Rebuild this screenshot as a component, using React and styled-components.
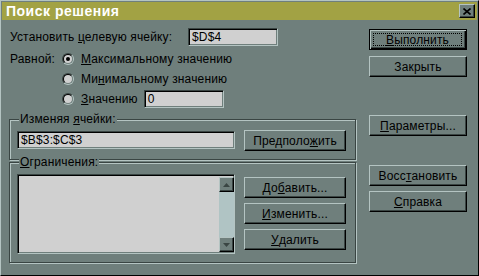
import React from 'react';
import styled, { createGlobalStyle, css } from 'styled-components';

const c = {
  face: '#6f7f7c',
  light: '#b4c4c2',
  dark: '#3a4543',
  black: '#000000',
  field: '#d0d0d0',
  title: '#a2a244',
  track: '#b0c4c4',
  text: '#000000',
};

const GlobalStyle = createGlobalStyle`
  html, body { margin: 0; padding: 0; background: ${c.face}; }
  body { font-family: "Liberation Sans", Arial, sans-serif; font-size: 12px; letter-spacing: 0.15px; color: ${c.text}; }
  * { box-sizing: border-box; }
`;

// window frame
const Window = styled.div`
  width: 479px;
  height: 276px;
  background: ${c.face};
  border: 1px solid;
  border-color: ${c.light} ${c.black} ${c.black} ${c.light};
  padding: 1px;
  display: flex;
  flex-direction: column;
  overflow: hidden;
`;

const TitleBar = styled.div`
  height: 18px;
  background: ${c.title};
  display: flex;
  align-items: center;
  justify-content: space-between;
  padding: 0 2px 0 4px;
`;

const Title = styled.span`
  color: #ffffff;
  font-weight: bold;
  font-size: 14px;
  letter-spacing: 0.5px;
`;

const CloseButton = styled.div`
  width: 16px;
  height: 14px;
  background: ${c.face};
  border: 1px solid;
  border-color: ${c.light} ${c.black} ${c.black} ${c.light};
  box-shadow: inset -1px -1px 0 ${c.dark};
  display: flex;
  align-items: center;
  justify-content: center;
`;

const Body = styled.div`
  flex: 1;
  display: flex;
  gap: 13px;
  padding: 8px 0 0 7px;
`;

const MainColumn = styled.div`
  width: 347px;
  display: flex;
  flex-direction: column;
`;

const FieldRow = styled.div`
  display: flex;
  align-items: center;
  height: 18px;
`;

const Label = styled.span`
  width: ${p => p.$w || 'auto'};
  padding-left: ${p => p.$pl || 1}px;
  white-space: nowrap;
  align-self: ${p => p.$top ? 'flex-start' : 'auto'};
  line-height: 20px;
`;

const U = styled.span`
  text-decoration: underline;
  text-underline-offset: 1px;
`;

const sunken = css`
  border: 1px solid;
  border-color: ${c.dark} ${c.light} ${c.light} ${c.dark};
  box-shadow: inset 1px 1px 0 ${c.black}, inset -1px -1px 0 ${c.face};
`;

const TextInput = styled.div`
  width: ${p => p.$w}px;
  height: 18px;
  margin-left: ${p => p.$ml || 0}px;
  background: ${c.field};
  ${sunken};
  padding: 0 3px;
  line-height: 16px;
  white-space: nowrap;
`;

const EqualBlock = styled.div`
  display: flex;
  margin-top: 3px;
`;

const RadioList = styled.div`
  display: flex;
  flex-direction: column;
`;

const RadioRow = styled.div`
  display: flex;
  align-items: center;
  height: 20px;
  gap: 7px;
`;

const RadioOuter = styled.span`
  width: 12px;
  height: 12px;
  border-radius: 50%;
  border: 1px solid;
  border-color: ${c.dark} ${c.light} ${c.light} ${c.dark};
  display: flex;
`;

const RadioInner = styled.span`
  flex: 1;
  border-radius: 50%;
  border: 1px solid;
  border-color: ${c.black} ${c.face} ${c.face} ${c.black};
  background: ${c.field};
  display: flex;
  align-items: center;
  justify-content: center;
  &::after {
    content: '';
    width: 4px;
    height: 4px;
    border-radius: 50%;
    background: ${p => p.$on ? c.black : 'transparent'};
  }
`;

const Radio = ({ on, children, after }) => (
  <RadioRow>
    <RadioOuter><RadioInner $on={on} /></RadioOuter>
    <span>{children}</span>
    {after}
  </RadioRow>
);

const GroupBox = styled.fieldset`
  margin: ${p => p.$mt || 0}px 0 0 0;
  padding: ${p => p.$pad};
  min-width: 0;
  height: ${p => p.$h}px;
  border: 1px solid ${c.dark};
  box-shadow: 1px 1px 0 ${c.light}, inset 1px 1px 0 ${c.light};
  display: flex;
  gap: 9px;
`;

const Legend = styled.legend`
  padding: 0 1px;
  margin-left: 2px;
  line-height: 13px;
  background: ${c.face};
`;

const Button = styled.div`
  width: ${p => p.$w || 98}px;
  height: 21px;
  flex-shrink: 0;
  display: flex;
  align-items: center;
  justify-content: center;
  border: 1px solid;
  border-color: ${c.light} ${c.black} ${c.black} ${c.light};
  box-shadow: inset -1px -1px 0 ${c.dark};
  white-space: nowrap;
  margin-top: ${p => p.$mt || 0}px;
  ${p => p.$default && css`
    border: 1px solid ${c.black};
    box-shadow: inset 1px 1px 0 ${c.light}, inset -1px -1px 0 ${c.black}, inset -2px -2px 0 ${c.dark};
  `}
`;

const FocusRing = styled.span`
  flex: 1;
  align-self: stretch;
  margin: 3px 4px 3px 3px;
  border: 1px dotted ${c.black};
  display: flex;
  align-items: center;
  justify-content: center;
`;

const ButtonStack = styled.div`
  display: flex;
  flex-direction: column;
  gap: 5px;
  padding-top: ${p => p.$pt || 0}px;
`;

const ListBox = styled.div`
  width: 218px;
  height: 80px;
  background: ${c.field};
  ${sunken};
  display: flex;
  justify-content: flex-end;
  padding: 2px 0 0 0;
  margin-top: 5px;
`;

const ScrollBar = styled.div`
  width: 15px;
  background: ${c.track};
  display: flex;
  flex-direction: column;
  justify-content: space-between;
  margin-bottom: 1px;
`;

const ScrollButton = styled.div`
  height: 15px;
  background: ${c.face};
  border: 1px solid;
  border-color: ${c.light} ${c.black} ${c.black} ${c.light};
  box-shadow: inset -1px -1px 0 ${c.dark};
  display: flex;
  align-items: center;
  justify-content: center;
`;

const SideColumn = styled.div`
  display: flex;
  flex-direction: column;
  padding-top: 1px;
`;

const Arrow = ({ down }) => (
  <svg width="7" height="4" viewBox="0 0 7 4">
    <path d={down ? 'M0 0h7L3.5 4z' : 'M3.5 0L7 4H0z'} fill={c.dark} />
  </svg>
);

export default function App() {
  return (
    <>
      <GlobalStyle />
      <Window>
        <TitleBar>
          <Title>Поиск решения</Title>
          <CloseButton>
            <svg width="8" height="7" viewBox="0 0 8 7">
              <path d="M0.5 0.5L7.5 6.5M7.5 0.5L0.5 6.5" stroke="#000" strokeWidth="1.6" />
            </svg>
          </CloseButton>
        </TitleBar>
        <Body>
          <MainColumn>
            <FieldRow>
              <Label $w="179px">Установить <U>ц</U>елевую ячейку:</Label>
              <TextInput $w={90}>$D$4</TextInput>
            </FieldRow>
            <EqualBlock>
              <Label $w="53px" $top>Равной:</Label>
              <RadioList>
                <Radio on><U>М</U>аксимальному значению</Radio>
                <Radio>Ми<U>н</U>имальному значению</Radio>
                <Radio after={<TextInput $w={80} $ml={-1}>0</TextInput>}>
                  <U>З</U>начению
                </Radio>
              </RadioList>
            </EqualBlock>
            <GroupBox $mt={4} $h={47} $pad="4px 9px 0 7px">
              <Legend>Изменяя <U>я</U>чейки:</Legend>
              <TextInput $w={218} style={{ marginTop: 1 }}>$B$3:$C$3</TextInput>
              <Button $w={102}>Предполо<U>ж</U>ить</Button>
            </GroupBox>
            <GroupBox $mt={-4} $h={107} $pad="0 9px 0 7px">
              <Legend><U>О</U>граничения:</Legend>
              <ListBox>
                <ScrollBar>
                  <ScrollButton><Arrow /></ScrollButton>
                  <ScrollButton><Arrow down /></ScrollButton>
                </ScrollBar>
              </ListBox>
              <ButtonStack $pt={8}>
                <Button $w={102}>До<U>б</U>авить...</Button>
                <Button $w={102}><U>И</U>зменить...</Button>
                <Button $w={102}><U>У</U>далить</Button>
              </ButtonStack>
            </GroupBox>
          </MainColumn>
          <SideColumn>
            <Button $default><FocusRing><U>В</U>ыполнить</FocusRing></Button>
            <Button $mt={6}>Закрыть</Button>
            <Button $mt={38}><U>П</U>араметры...</Button>
            <Button $mt={29}>Восс<U>т</U>ановить</Button>
            <Button $mt={5}><U>С</U>правка</Button>
          </SideColumn>
        </Body>
      </Window>
    </>
  );
}
